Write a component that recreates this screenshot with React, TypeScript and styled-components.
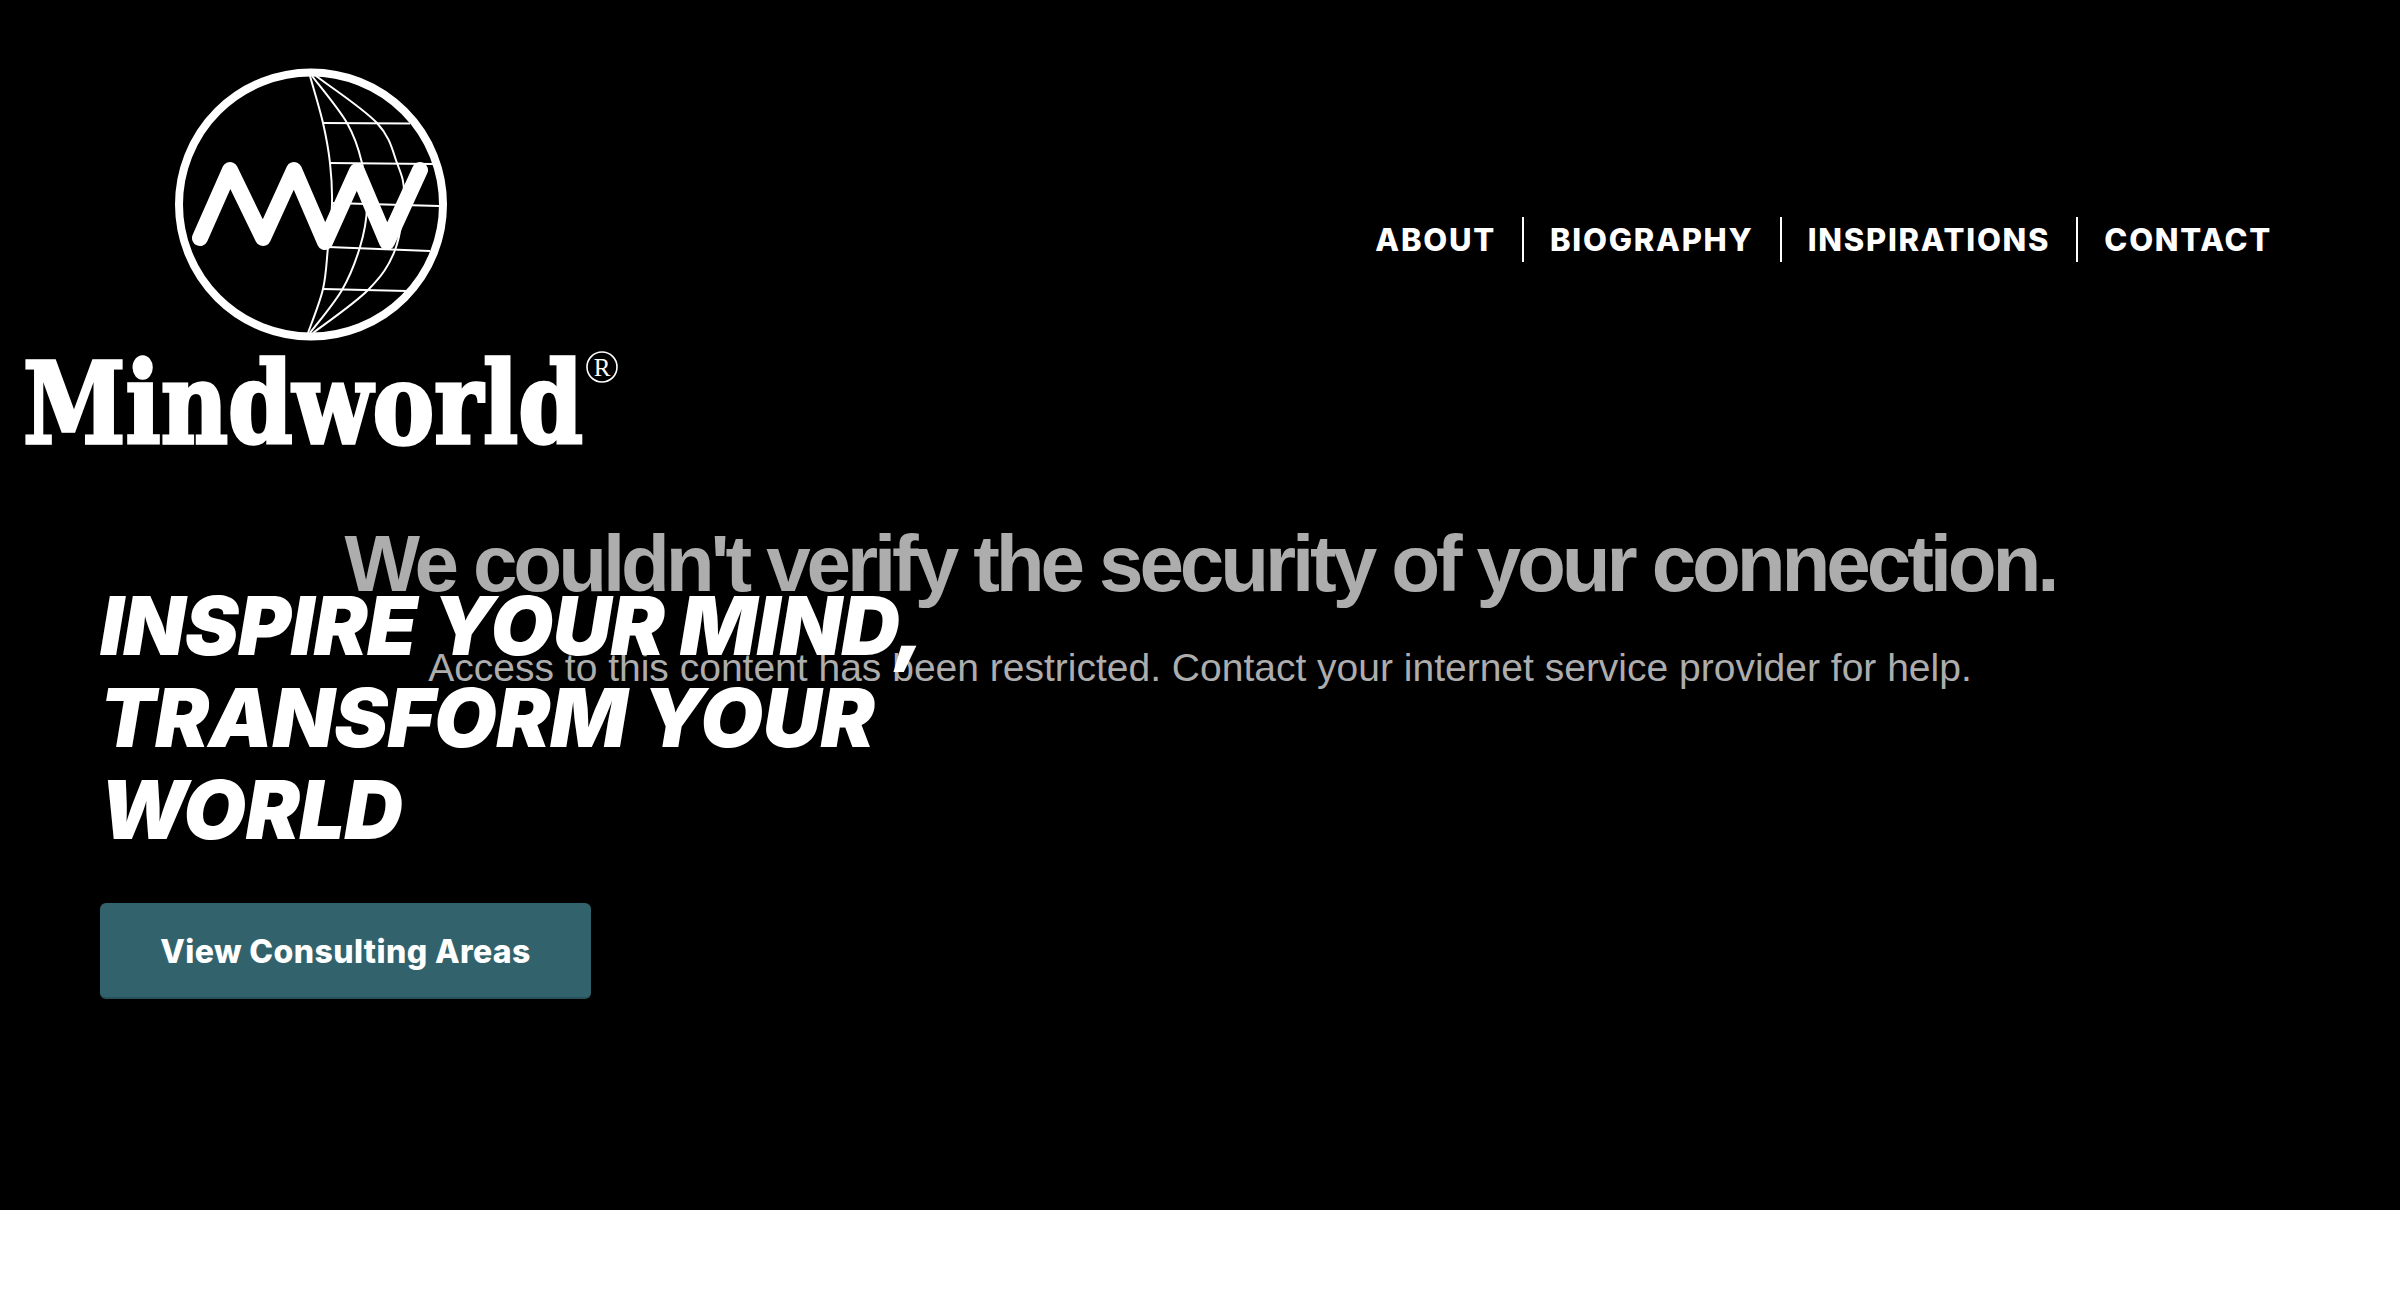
import React from "react";
import styled, { createGlobalStyle } from "styled-components";

const Global = createGlobalStyle`
  html, body { margin: 0; padding: 0; background: #fff; }
  #root { width: 2400px; height: 1298px; overflow: hidden; }
`;

const Page = styled.div`
  position: relative;
  width: 2400px;
  height: 1298px;
  background: #fff;
`;

const Hero = styled.section`
  position: relative;
  height: 1210px;
  background: #000;
  display: flex;
  flex-direction: column;
`;

const Header = styled.header`
  position: relative;
  z-index: 2;
  display: flex;
  justify-content: space-between;
  align-items: flex-start;
  height: 580px;
  padding-right: 128px;
`;

const Logo = styled.svg`
  display: block;
  width: 640px;
  height: 480px;
  flex: none;
  overflow: visible;
`;

const LogoWord = styled.text`
  font-family: "DejaVu Serif", serif;
  font-weight: 700;
  font-size: 113px;
  fill: #fff;
  stroke: #fff;
  stroke-width: 3.5px;
`;

const LogoMark = styled.text`
  font-family: "Liberation Serif", serif;
  font-size: 25px;
  fill: #fff;
`;

const Nav = styled.nav`
  display: flex;
  align-items: center;
  margin-top: 217px;
`;

const NavLink = styled.a<{ $first?: boolean; $last?: boolean }>`
  display: flex;
  align-items: center;
  height: 45px;
  padding: 0 ${(p) => (p.$last ? 0 : 26)}px 0 ${(p) => (p.$first ? 0 : 26)}px;
  border-right: ${(p) => (p.$last ? "none" : "2px solid #fff")};
  color: #fff;
  font-family: Inter, sans-serif;
  font-weight: 800;
  font-size: 31px;
  letter-spacing: 1.75px;
  white-space: nowrap;
`;

const Content = styled.div`
  position: relative;
  z-index: 2;
  padding-left: 100px;
  display: flex;
  flex-direction: column;
  align-items: flex-start;
`;

const Title = styled.h1`
  margin: 0;
  width: 900px;
  color: #fff;
  font-family: Inter, sans-serif;
  font-style: italic;
  font-weight: 900;
  font-size: 81px;
  line-height: 92px;
  letter-spacing: -0.6px;
`;

const Cta = styled.a`
  display: flex;
  align-items: center;
  justify-content: center;
  margin-top: 47px;
  padding-top: 2px;
  width: 491px;
  height: 96px;
  box-sizing: border-box;
  border-radius: 6px;
  background: #32636d;
  border-bottom: 2px solid #27525b;
  color: #fff;
  font-family: Inter, sans-serif;
  font-weight: 800;
  font-size: 32px;
  letter-spacing: 0.4px;
`;

const Notice = styled.div`
  position: absolute;
  z-index: 1;
  left: 0;
  right: 0;
  top: 516px;
  text-align: center;
  color: #adadad;
  font-family: "Liberation Sans", Arial, sans-serif;
`;

const NoticeTitle = styled.div`
  font-weight: 700;
  font-size: 80px;
  line-height: 96px;
  letter-spacing: -4.1px;
`;

const NoticeText = styled.div`
  margin-top: 30px;
  font-size: 39px;
  line-height: 52px;
`;

type Point = [number, number];

const smooth = (pts: Point[]) => {
  let d = `M${pts[0][0]} ${pts[0][1]}`;
  for (let i = 0; i < pts.length - 1; i++) {
    const p0 = pts[Math.max(i - 1, 0)];
    const p1 = pts[i];
    const p2 = pts[i + 1];
    const p3 = pts[Math.min(i + 2, pts.length - 1)];
    const c1x = p1[0] + (p2[0] - p0[0]) / 6;
    const c1y = p1[1] + (p2[1] - p0[1]) / 6;
    const c2x = p2[0] - (p3[0] - p1[0]) / 6;
    const c2y = p2[1] - (p3[1] - p1[1]) / 6;
    d += `C${c1x} ${c1y} ${c2x} ${c2y} ${p2[0]} ${p2[1]}`;
  }
  return d;
};

const meridians: Point[][] = [
  [[310, 76], [323, 123], [330, 163], [332, 204], [328, 247], [323, 289], [308, 333]],
  [[312, 76], [347, 123], [362, 163], [367, 207], [360, 247], [342, 290], [310, 333]],
  [[316, 76], [377, 123], [397, 163], [404, 195], [395, 250], [368, 290], [313, 333]],
];

export default function App() {
  return (
    <Page>
      <Global />
      <Hero>
        <Header>
          <Logo viewBox="0 0 640 480" aria-label="Mindworld">
            <circle cx="311" cy="204.5" r="132" fill="none" stroke="#fff" strokeWidth="8" />
            <g fill="none" stroke="#fff" strokeWidth="2">
              {meridians.map((pts) => (
                <path key={pts[2][0]} d={smooth(pts)} />
              ))}
              <path d="M323 123L410 123.500" />
              <path d="M329 163L433 164" />
              <path d="M332 203L439 206" />
              <path d="M328 247L430 251" />
              <path d="M323 289L407 291" />
            </g>
            <path
              d="M200 238L230 170L263 238L294 170L325 242L357 171L387 242L420 170"
              fill="none"
              stroke="#fff"
              strokeWidth="16"
              strokeLinecap="round"
              strokeLinejoin="round"
            />
            <LogoWord x="23" y="443" textLength="560" lengthAdjust="spacingAndGlyphs">Mindworld</LogoWord>
            <circle cx="602" cy="367" r="15" fill="none" stroke="#fff" strokeWidth="1.6" />
            <LogoMark x="602" y="375.5" textAnchor="middle">R</LogoMark>
          </Logo>
          <Nav>
            <NavLink $first>ABOUT</NavLink>
            <NavLink>BIOGRAPHY</NavLink>
            <NavLink>INSPIRATIONS</NavLink>
            <NavLink $last>CONTACT</NavLink>
          </Nav>
        </Header>
        <Content>
          <Title>INSPIRE YOUR MIND, TRANSFORM YOUR WORLD</Title>
          <Cta>View Consulting Areas</Cta>
        </Content>
        <Notice>
          <NoticeTitle>We couldn't verify the security of your connection.</NoticeTitle>
          <NoticeText>Access to this content has been restricted. Contact your internet service provider for help.</NoticeText>
        </Notice>
      </Hero>
    </Page>
  );
}
